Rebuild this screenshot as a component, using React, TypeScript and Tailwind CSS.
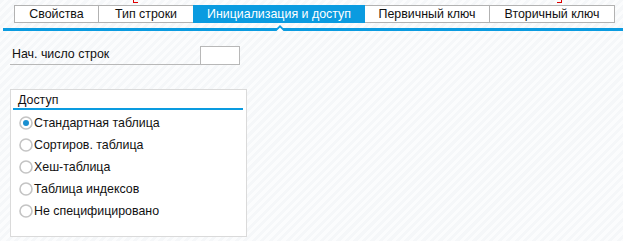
import React from "react";

const tabs = [
  { label: "Свойства", w: 85 },
  { label: "Тип строки", w: 94 },
  { label: "Инициализация и доступ", w: 172, active: true },
  { label: "Первичный ключ", w: 125 },
  { label: "Вторичный ключ", w: 125 },
];

const radios = [
  { label: "Стандартная таблица", checked: true },
  { label: "Сортиров. таблица" },
  { label: "Хеш-таблица" },
  { label: "Таблица индексов" },
  { label: "Не специфицировано" },
];

function Radio({ checked }: { checked?: boolean }) {
  return (
    <svg width="14" height="14" viewBox="0 0 14 14" className="shrink-0">
      <circle cx="7" cy="7" r="6" fill="#fff" stroke="#c4c4c4" strokeWidth="1.6" />
      {checked && <circle cx="7" cy="7" r="3" fill="#1a8fd0" />}
    </svg>
  );
}

export default function App() {
  return (
    <div
      className="relative w-[623px] h-[241px] overflow-hidden bg-[repeating-linear-gradient(135deg,#f5f7f9_0px,#f5f7f9_3px,#fbfcfd_3px,#fbfcfd_6px)] text-[12.4px] text-[#111]"
      style={{ fontFamily: '"Liberation Sans", Arial, sans-serif' }}
    >
      <div className="absolute left-[133px] top-0 w-[5px] h-[3px] border-l border-b border-[#e00000]" />
      <div className="absolute left-[557px] top-0 w-[5px] h-[3px] border-r border-b border-[#e00000]" />

      <div className="pt-[5px] pl-[14px] flex">
        {tabs.map((t, i) =>
          t.active ? (
            <div
              key={i}
              className="h-[18px] flex items-center justify-center bg-[#0a9be0] text-white"
              style={{ width: t.w }}
            >
              {t.label}
            </div>
          ) : (
            <div
              key={i}
              className={`h-[18px] flex items-center justify-center bg-white border-y border-[#b2b2b2] ${
                i === 0 ? "border-l" : ""
              } ${i !== 1 ? "border-r" : ""}`}
              style={{ width: t.w }}
            >
              {t.label}
            </div>
          )
        )}
      </div>

      <div className="relative mt-[5px] ml-[3px] h-[3px] bg-[#0a9be0]">
        <svg
          width="12"
          height="6"
          viewBox="0 0 12 6"
          className="absolute left-[271px] top-[-3px]"
        >
          <path d="M0 6 L6 0 L12 6 Z" fill="#0a9be0" />
          <path d="M2.5 6 L6 2.5 L9.5 6 Z" fill="#ffffff" />
        </svg>
      </div>

      <div className="mt-[15px] ml-[10px] flex items-end">
        <div className="w-[190px] h-[19px] border-b border-[#b8b8b8] pl-[2px] leading-[17px]">
          Нач. число строк
        </div>
        <div className="w-[40px] h-[19px] bg-white border border-[#b8b8b8]" />
      </div>

      <div className="mt-[24px] ml-[10px] w-[237px] h-[148px] bg-white border border-[#dadada] px-[2px] pt-[3px]">
        <div className="pl-[5px] h-[14px] leading-[14px]">Доступ</div>
        <div className="mt-[1px] h-[2px] bg-[#0a9be0] mr-[1px]" />
        <div className="mt-[5px] pl-[6px] flex flex-col gap-[6px]">
          {radios.map((r, i) => (
            <div key={i} className="flex items-center gap-[1px] h-[16px]">
              <Radio checked={r.checked} />
              <span>{r.label}</span>
            </div>
          ))}
        </div>
      </div>
    </div>
  );
}
